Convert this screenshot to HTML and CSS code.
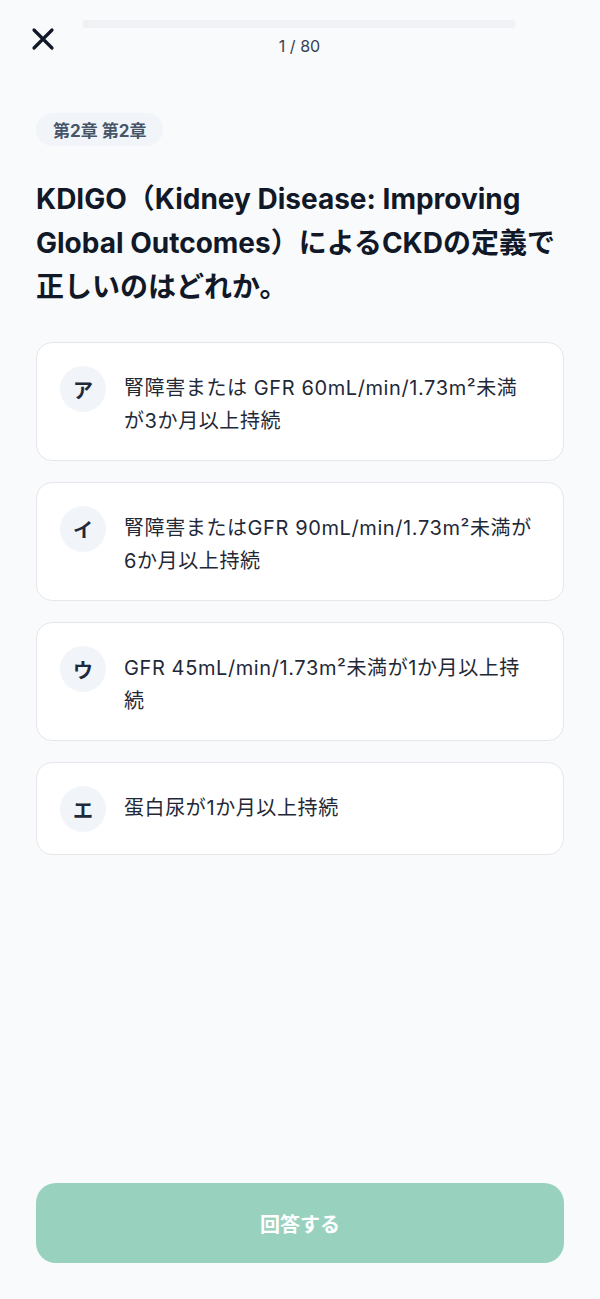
FILE: index.html
```html
<!DOCTYPE html>
<html lang="ja">
<head>
<meta charset="utf-8">
<title>Quiz</title>
<link rel="stylesheet" href="styles.css">
</head>
<body>
<div class="app">
  <header class="topbar">
    <button class="close" aria-label="閉じる">
      <svg viewBox="0 0 24 24" width="24" height="24"><path d="M3 3L21 21M21 3L3 21" stroke="#111827" stroke-width="3.2" stroke-linecap="round" fill="none"/></svg>
    </button>
    <div class="progress">
      <div class="track"><div class="fill" style="width:1.25%"></div></div>
      <div class="counter">1 / 80</div>
    </div>
  </header>

  <main class="content">
    <span class="chip">第2章 第2章</span>
    <h1 class="question">KDIGO（Kidney Disease: Improving Global Outcomes）によるCKDの定義で正しいのはどれか。</h1>
    <div class="options">
      <div class="option"><span class="badge">ア</span><p class="opt-text">腎障害または GFR 60mL/min/1.73m²未満が3か月以上持続</p></div>
      <div class="option"><span class="badge">イ</span><p class="opt-text">腎障害またはGFR 90mL/min/1.73m²未満が6か月以上持続</p></div>
      <div class="option"><span class="badge">ウ</span><p class="opt-text">GFR 45mL/min/1.73m²未満が1か月以上持続</p></div>
      <div class="option"><span class="badge">エ</span><p class="opt-text">蛋白尿が1か月以上持続</p></div>
    </div>
  </main>

  <footer class="footer">
    <button class="submit" disabled>回答する</button>
  </footer>
</div>
</body>
</html>
```

FILE: styles.css
```css
* { box-sizing: border-box; }

html, body {
  margin: 0;
  padding: 0;
  background: #f9fafb;
}

body {
  font-family: Inter, "Noto Sans CJK JP", sans-serif;
  color: #111827;
}

.app {
  display: flex;
  flex-direction: column;
  min-height: 1299px;
}

.topbar {
  display: grid;
  grid-template-columns: 83px 1fr 84px;
  padding-top: 20px;
}

.close {
  grid-column: 1;
  align-self: start;
  justify-self: start;
  margin: 7px 0 0 31px;
  width: 24px;
  height: 24px;
  padding: 0;
  border: 0;
  background: none;
  display: block;
}

.close svg { display: block; }

.progress {
  grid-column: 2;
  display: flex;
  flex-direction: column;
  align-items: center;
}

.track {
  width: 100%;
  height: 8px;
  border-radius: 4px;
  background: #f0f2f5;
  overflow: hidden;
}

.fill {
  height: 100%;
  background: #eef1f4;
}

.counter {
  margin-top: 8px;
  font-size: 16px;
  line-height: 20px;
  color: #374151;
}

.content {
  padding: 57px 36px 0;
}

.chip {
  display: inline-flex;
  align-items: center;
  height: 33px;
  padding: 0 17px;
  border-radius: 17px;
  background: #f1f5f9;
  color: #475569;
  font-size: 17px;
  font-weight: 700;
}

.question {
  margin: 31px 0 33px;
  font-size: 28px;
  line-height: 44px;
  font-weight: 700;
  color: #111827;
}

.options {
  display: flex;
  flex-direction: column;
  gap: 21px;
}

.option {
  display: flex;
  align-items: flex-start;
  gap: 18px;
  padding: 23px 27px 22px 23px;
  background: #ffffff;
  border: 1px solid #e5e7eb;
  border-radius: 16px;
}

.badge {
  flex: none;
  width: 46px;
  height: 46px;
  border-radius: 50%;
  background: #f1f5f9;
  display: flex;
  align-items: center;
  justify-content: center;
  font-size: 20px;
  font-weight: 700;
  color: #1e293b;
}

.opt-text {
  margin: 6px 0 0;
  font-size: 20px;
  line-height: 33px;
  letter-spacing: 0.6px;
  color: #1f2937;
}

.footer {
  margin-top: auto;
  padding: 0 36px 36px;
}

.submit {
  display: block;
  width: 100%;
  height: 80px;
  border: 0;
  border-radius: 20px;
  background: #98d2bf;
  color: #ffffff;
  font-family: inherit;
  font-size: 20px;
  font-weight: 700;
}
```
